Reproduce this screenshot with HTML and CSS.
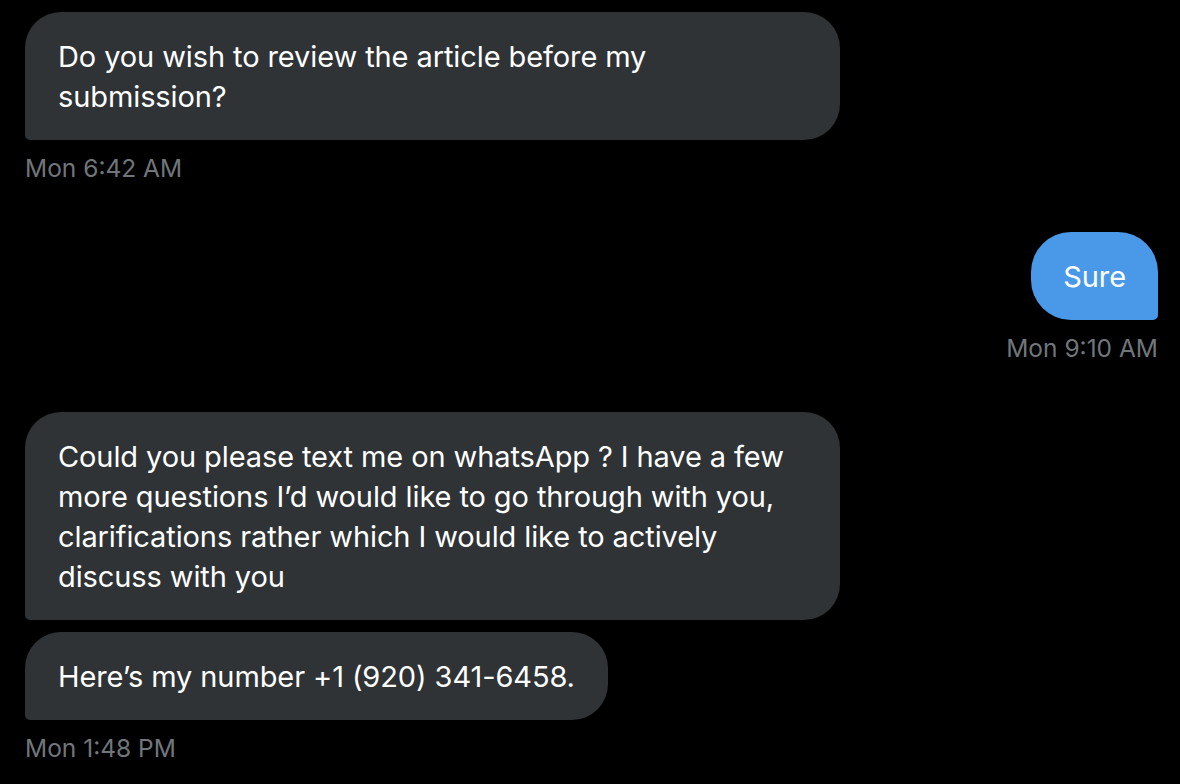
FILE: index.html
```html
<!DOCTYPE html>
<html>
<head>
<meta charset="utf-8">
<link rel="stylesheet" href="styles.css">
</head>
<body>
<div class="thread">
  <div class="group in">
    <div class="bubble">Do you wish to review the article before my submission?</div>
    <div class="time">Mon 6:42 AM</div>
  </div>
  <div class="group out">
    <div class="bubble">Sure</div>
    <div class="time">Mon 9:10 AM</div>
  </div>
  <div class="group in">
    <div class="bubble">Could you please text me on whatsApp ? I have a few more questions I’d would like to go through with you, clarifications rather which I would like to actively discuss with you</div>
    <div class="bubble">Here’s my number +1 (920) 341-6458.</div>
    <div class="time">Mon 1:48 PM</div>
  </div>
</div>
</body>
</html>
```
FILE: styles.css
```css
html, body {
  margin: 0;
  padding: 0;
  background: #000;
}
body {
  font-family: Inter, "Noto Sans", sans-serif;
  color: #e7e9ea;
  width: 1180px;
  height: 784px;
  overflow: hidden;
}
.thread {
  display: flex;
  flex-direction: column;
  gap: 48px;
  padding: 12px 22px 0 25px;
}
.group {
  display: flex;
  flex-direction: column;
  gap: 12px;
}
.group.in { align-items: flex-start; }
.group.out { align-items: flex-end; }
.bubble {
  max-width: 815px;
  box-sizing: border-box;
  padding: 25px 33px 23px;
  font-size: 29px;
  line-height: 40px;
  letter-spacing: -0.1px;
  color: #fff;
  background: #2f3336;
  border-radius: 36px 36px 36px 5px;
}
.group.out .bubble {
  background: #4a99e9;
  border-radius: 40px 40px 5px 40px;
  padding: 25px 32px 23px;
}
.time {
  font-size: 24.5px;
  line-height: 32px;
  color: #71767b;
}
```
